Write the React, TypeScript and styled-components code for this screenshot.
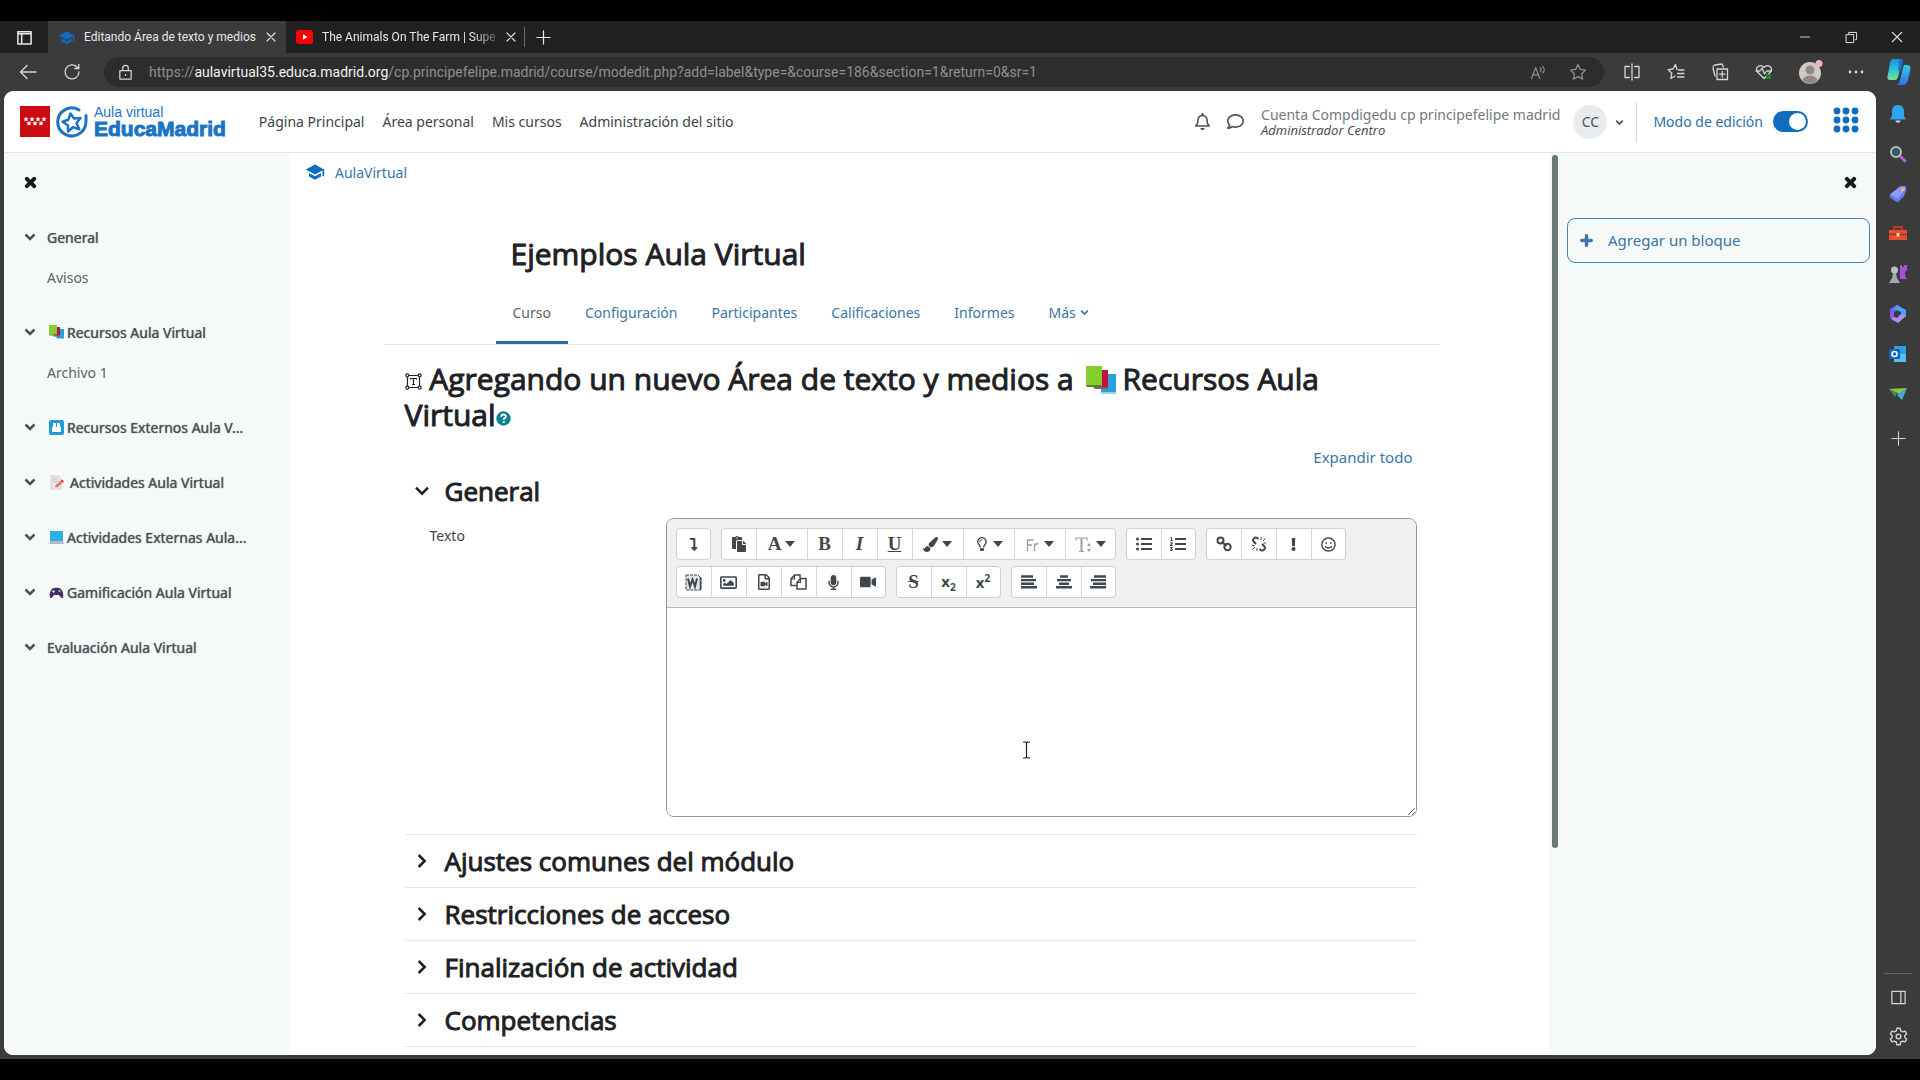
import React from "react";
import styled, { createGlobalStyle } from "styled-components";
import {
  FaExclamation,
  FaLevelDownAlt,
  FaListOl,
  FaListUl,
  FaMicrophone,
  FaPaintBrush,
  FaPaste,
  FaPlus,
  FaRegBell,
  FaRegComment,
  FaRegFileVideo,
  FaRegImage,
  FaRegLightbulb,
  FaRegSmile,
  FaTimes,
  FaVideo,
} from "react-icons/fa";

const UI = `"Noto Sans", "Open Sans", sans-serif`;
const HEADING = `"Open Sans", "Noto Sans", sans-serif`;
const CHROME = `Roboto, "Noto Sans", sans-serif`;

const c = {
  strip: "#212121",
  chrome: "#3b3b3b",
  field: "#2d2d2d",
  drawer: "#f5f9f8",
  link: "#3b75a5",
  brand: "#0f6cbf",
  logo: "#1c74c4",
  text: "#1d2125",
  muted: "#4b5257",
  line: "#e3e5e7",
};

const Global = createGlobalStyle`
  * { box-sizing: border-box; }
  html, body, #root { height: 100%; margin: 0; }
  body { background: #000; font-family: ${UI}; font-size: 14px; color: ${c.text}; }
  h1, h2, h3, ul, p { margin: 0; padding: 0; font-weight: 400; }
  ul { list-style: none; }
  a { text-decoration: none; color: ${c.link}; }
  button { font: inherit; color: inherit; background: none; border: 0; padding: 0; }
  svg { display: block; flex: none; }
`;

/* ---------- Browser window ---------- */

const Screen = styled.div`
  height: 100vh;
  padding: 21px 0;
  background: #000;
  overflow: hidden;
`;

const BrowserWindow = styled.div`
  display: flex;
  flex-direction: column;
  height: 100%;
  background: ${c.chrome};
`;

const TabStrip = styled.div`
  display: flex;
  align-items: center;
  height: 32px;
  flex: none;
  background: ${c.strip};
  color: #e8e8e8;
  font-family: ${CHROME};
  font-size: 12px;
`;

const StripButton = styled.button<{ $w: number }>`
  display: flex;
  align-items: center;
  justify-content: center;
  width: ${(p) => p.$w}px;
  height: 32px;
  color: #e8e8e8;
`;

const BrowserTab = styled.div<{ $active?: boolean }>`
  display: flex;
  align-items: center;
  gap: 9px;
  height: 32px;
  width: 238px;
  padding: 0 10px;
  background: ${(p) => (p.$active ? c.chrome : "transparent")};
`;

const TabTitle = styled.span<{ $fade?: boolean }>`
  flex: 1;
  white-space: nowrap;
  mask-image: ${(p) => (p.$fade ? "linear-gradient(90deg, #000 86%, #0004)" : "none")};
`;

const StripDivider = styled.span`
  width: 1px;
  height: 20px;
  background: #6a6a6a;
`;

const Spacer = styled.span`
  flex: 1;
`;

const Toolbar = styled.div`
  display: flex;
  align-items: center;
  height: 38px;
  flex: none;
  padding-left: 6px;
  color: #d6d6d6;
`;

const ToolButton = styled.button<{ $w?: number }>`
  display: flex;
  align-items: center;
  justify-content: center;
  width: ${(p) => p.$w ?? 44}px;
  height: 32px;
  flex: none;
`;

const AddressBar = styled.div`
  display: flex;
  align-items: center;
  flex: 1;
  height: 30px;
  margin: 0 6px 0 10px;
  padding: 0 6px 0 13px;
  border-radius: 15px;
  background: ${c.field};
  color: #8f8f8f;
  font-family: ${CHROME};
  font-size: 14px;
`;

const LockMark = styled.span`
  color: #d6d6d6;
`;

const Url = styled.span`
  flex: 1;
  margin-left: 15px;
  white-space: nowrap;
  overflow: hidden;

  b {
    font-weight: 400;
    color: #f2f2f2;
  }
`;

const Body = styled.div`
  display: flex;
  flex: 1;
  min-height: 0;
  padding: 0 0 4px 4px;
`;

const EdgeRail = styled.nav`
  display: flex;
  flex-direction: column;
  align-items: center;
  width: 44px;
  flex: none;
  padding-top: 3px;
  color: #d6d6d6;
`;

const RailButton = styled.button<{ $h?: number }>`
  display: flex;
  align-items: center;
  justify-content: center;
  width: 44px;
  height: ${(p) => p.$h ?? 40}px;
`;

const RailRule = styled.span`
  width: 28px;
  height: 1px;
  margin-bottom: 3px;
  background: #636363;
`;

/* ---------- Moodle page ---------- */

const Page = styled.div`
  display: flex;
  flex-direction: column;
  flex: 1;
  min-width: 0;
  border-radius: 9px;
  overflow: hidden;
  background: #fff;
`;

const Header = styled.header`
  display: flex;
  align-items: center;
  height: 62px;
  flex: none;
  padding: 0 17px 0 16px;
  border-bottom: 1px solid ${c.line};
`;

const Brand = styled.a`
  display: flex;
  align-items: center;
  gap: 6px;
`;

const BrandText = styled.span`
  display: flex;
  flex-direction: column;
  padding-bottom: 1px;
  color: ${c.logo};
  font-family: "Liberation Sans", Arial, sans-serif;
  font-size: 14px;
  line-height: 16px;

  b {
    font-size: 21px;
    line-height: 18px;
    -webkit-text-stroke: 1px ${c.logo};
  }
`;

const MainNav = styled.nav`
  display: flex;
  gap: 18px;
  margin-left: 33px;

  a {
    color: #3e4347;
  }
`;

const IconButton = styled.button<{ $m?: string }>`
  display: flex;
  align-items: center;
  color: ${c.muted};
  margin: ${(p) => p.$m ?? "0"};
`;

const User = styled.div`
  display: flex;
  flex-direction: column;
  margin-left: 17px;
  color: #73797d;
  line-height: 18px;

  em {
    font-family: ${HEADING};
    font-size: 13px;
    line-height: 13px;
    color: #3e4347;
  }
`;

const Avatar = styled.span`
  display: flex;
  align-items: center;
  justify-content: center;
  width: 34px;
  height: 34px;
  margin-left: 13px;
  border-radius: 50%;
  background: #e9ecef;
  color: ${c.muted};
`;

const ModeBox = styled.label`
  display: flex;
  align-items: center;
  gap: 10px;
  height: 40px;
  margin-left: 12px;
  padding-left: 16px;
  border-left: 1px solid #d8dbde;
  color: #2c6fa8;
`;

const Toggle = styled.input`
  appearance: none;
  display: flex;
  align-items: center;
  justify-content: flex-end;
  width: 35px;
  height: 21px;
  margin: 0;
  padding: 2px;
  border-radius: 11px;
  background: ${c.brand};

  &::before {
    content: "";
    width: 17px;
    height: 17px;
    border-radius: 50%;
    background: #fff;
  }
`;

const AppsButton = styled.button`
  margin-left: 25px;
  padding-bottom: 4px;
`;

const Columns = styled.div`
  display: flex;
  flex: 1;
  min-height: 0;
`;

const CourseIndex = styled.aside`
  width: 285px;
  flex: none;
  background: ${c.drawer};
  padding: 20px 16px 0 20px;
`;

const CloseButton = styled.button<{ $right?: boolean }>`
  display: flex;
  align-items: center;
  justify-content: center;
  width: 13px;
  height: 19px;
  color: #14181a;
  margin-left: ${(p) => (p.$right ? "auto" : "0")};
`;

const HeavyTimes = styled(FaTimes)`
  stroke: currentColor;
  stroke-width: 40px;
`;

const HeavyPlus = styled(FaPlus)`
  stroke: currentColor;
  stroke-width: 40px;
`;

const Sections = styled.ul`
  display: flex;
  flex-direction: column;
  gap: 15px;
  margin-top: 25px;
`;

const SectionHead = styled.div`
  display: flex;
  align-items: center;
  height: 40px;
`;

const SectionTitle = styled.a<{ $spaced?: boolean; $icon?: boolean }>`
  display: flex;
  align-items: center;
  gap: ${(p) => (p.$spaced ? 6 : 3)}px;
  margin-left: ${(p) => (p.$icon ? 13 : 11)}px;
  color: ${c.muted};
  text-shadow: 0 0 1px ${c.muted};
  white-space: nowrap;
`;

const SectionItem = styled.a`
  display: flex;
  align-items: center;
  height: 40px;
  padding-left: 23px;
  color: #5d6468;
`;

const Main = styled.main`
  flex: 1;
  min-width: 0;
  overflow: hidden;
  padding-right: 15px;
`;

const Breadcrumb = styled.nav`
  height: 38px;
  padding-left: 16px;

  a {
    display: flex;
    align-items: center;
    gap: 10px;
    height: 38px;
  }
`;

const Container = styled.div`
  max-width: 1056px;
  margin: 0 auto;
`;

const CourseTitle = styled.h1`
  margin-top: 45px;
  padding-left: 127px;
  font-family: ${HEADING};
  font-size: 30px;
  line-height: 36px;
  -webkit-text-stroke: 1px ${c.text};
`;

const CourseTabs = styled.nav`
  display: flex;
  margin-top: 8px;
  padding-left: 112px;
  border-bottom: 1px solid ${c.line};
`;

const CourseTab = styled.a<{ $active?: boolean }>`
  display: flex;
  align-items: center;
  gap: 4px;
  height: 64px;
  padding: 3px 17px 0;
  border-bottom: 3px solid ${(p) => (p.$active ? "#2a6ba6" : "transparent")};
  color: ${(p) => (p.$active ? "#5d6468" : c.link)};
`;

const Form = styled.form`
  padding: 16px 23px 0 21px;
`;

const FormTitle = styled.h2`
  padding-right: 60px;
  font-family: ${HEADING};
  font-size: 30px;
  line-height: 36px;
  -webkit-text-stroke: 1px ${c.text};

  svg {
    display: inline-block;
  }
`;

const TitleBooks = styled.span`
  margin: 0 7px 0 4px;

  svg {
    vertical-align: -6px;
  }
`;

const ExpandRow = styled.div`
  display: flex;
  justify-content: flex-end;
  margin-top: 12px;
  padding-right: 4px;
  font-size: 15px;
  line-height: 24px;
`;

const GroupHead = styled.h3<{ $ruled?: boolean }>`
  display: flex;
  align-items: center;
  gap: 15px;
  height: ${(p) => (p.$ruled ? 53 : 30)}px;
  margin-top: ${(p) => (p.$ruled ? 0 : 7)}px;
  padding-left: 9px;
  padding-bottom: 1px;
  border-top: ${(p) => (p.$ruled ? `1px solid ${c.line}` : "0")};
  font-family: ${HEADING};
  font-size: 26px;
  line-height: 30px;
  -webkit-text-stroke: 1px ${c.text};
`;

const Field = styled.div`
  display: grid;
  grid-template-columns: 261px 1fr;
  margin: 12px 0 17px;
`;

const FieldLabel = styled.label`
  padding: 8px 0 0 25px;
  line-height: 19px;
  color: #3e4347;
`;

const Editor = styled.div`
  position: relative;
  display: flex;
  flex-direction: column;
  height: 299px;
  border: 1px solid #8f959e;
  border-radius: 8px;
  overflow: hidden;
`;

const EditorTools = styled.div`
  display: flex;
  flex-direction: column;
  gap: 6px;
  padding: 9px;
  height: 89px;
  background: #f0f0f0;
  border-bottom: 1px solid #b4b8bc;
`;

const ToolRow = styled.div`
  display: flex;
  gap: 10px;
`;

const ToolGroup = styled.div`
  display: flex;
  border: 1px solid #cdd0d3;
  border-radius: 4px;
  background: #fff;
  overflow: hidden;
`;

const ToolItem = styled.button<{ $wide?: boolean; $faint?: boolean }>`
  display: flex;
  align-items: center;
  justify-content: center;
  gap: 4px;
  width: ${(p) => (p.$wide ? 51 : 35)}px;
  height: 30px;
  color: ${(p) => (p.$faint ? "#9a9fa3" : "#3f474c")};
  border-left: 1px solid #d5d8da;

  &:first-child {
    width: 34px;
    border-left: 0;
  }

  &:last-child {
    width: ${(p) => (p.$wide ? 50 : 34)}px;
  }

  &:only-child {
    width: 33px;
  }
`;

const Serif = styled.span<{ $style?: "italic" | "underline" | "strike" }>`
  font-family: "Liberation Serif", serif;
  font-weight: 700;
  font-size: 19px;
  line-height: 20px;
  font-style: ${(p) => (p.$style === "italic" ? "italic" : "normal")};
  text-decoration: ${(p) =>
    p.$style === "underline" ? "underline" : p.$style === "strike" ? "line-through" : "none"};
`;

const Script = styled.span`
  font-weight: 700;
  font-size: 15px;
  line-height: 18px;

  sub,
  sup {
    font-size: 10px;
    line-height: 9px;
  }
`;

const TextArea = styled.textarea`
  flex: 1;
  width: 100%;
  border: 0;
  outline: 0;
  resize: vertical;
  background: #fff;
`;

const Pointer = styled.span`
  position: absolute;
  left: 355px;
  top: 222px;
`;

const ScrollTrack = styled.div`
  width: 9px;
  flex: none;
  padding: 2px 0 0 3px;
  background: ${c.drawer};
`;

const ScrollThumb = styled.div`
  width: 6px;
  height: 77%;
  border-radius: 3px;
  background: #6b7876;
`;

const Blocks = styled.aside`
  width: 318px;
  flex: none;
  padding: 20px 6px 0 9px;
  background: ${c.drawer};
`;

const CloseRow = styled.div`
  display: flex;
  padding-right: 13px;
`;

const AddBlock = styled.a`
  display: flex;
  align-items: center;
  gap: 15px;
  height: 45px;
  margin-top: 26px;
  padding: 0 12px 1px;
  border: 1px solid #4585ae;
  border-radius: 8px;
  font-size: 15px;
`;

/* ---------- Drawings ---------- */

const Chevron = ({ s = 12, right = false, w = 3 }: { s?: number; right?: boolean; w?: number }) => (
  <svg width={s} height={s} viewBox="0 0 12 12" fill="none" stroke="currentColor">
    <path d={right ? "M3.5 1.5 8 6 3.5 10.5" : "M1.5 3.5 6 8l4.5-4.5"} strokeWidth={(w * 12) / s / 1.2} />
  </svg>
);

const Line = ({ s = 18, children, w = 1.3 }: { s?: number; w?: number; children: React.ReactNode }) => (
  <svg
    width={s}
    height={s}
    viewBox="0 0 18 18"
    fill="none"
    stroke="currentColor"
    strokeWidth={w}
    strokeLinecap="round"
    strokeLinejoin="round"
  >
    {children}
  </svg>
);

const Cross = ({ s }: { s: number }) => (
  <Line s={s} w={1.6}>
    <path d="M3 3l12 12M15 3 3 15" />
  </Line>
);

const Hat = ({ s = 20, color = c.brand }: { s?: number; color?: string }) => (
  <svg width={s} height={s} viewBox="0 0 20 20" fill={color}>
    <path d="M10 2.5 0.8 7.5 10 12.5l7.5-4.1v5.8h1.7V7.5z" />
    <path d="M4 11v3.6l6 3.2 6-3.2V11l-6 3.3z" />
  </svg>
);

const MadridFlag = () => (
  <svg width="30" height="31" viewBox="0 0 30 31">
    <rect width="30" height="31" fill="#cc0a12" />
    {[6, 12, 18, 24].map((x) => (
      <path key={x} d={`M${x} 10.6l.8 1.6 1.8.2-1.3 1.2.3 1.8-1.6-.9-1.6.9.3-1.8-1.3-1.2 1.8-.2z`} fill="#fff" />
    ))}
    {[9, 15, 21].map((x) => (
      <path key={x} d={`M${x} 14.8l.8 1.6 1.8.2-1.3 1.2.3 1.8-1.6-.9-1.6.9.3-1.8-1.3-1.2 1.8-.2z`} fill="#fff" />
    ))}
  </svg>
);

const EducaMark = () => (
  <svg width="32" height="32" viewBox="0 0 32 32" fill="none" stroke={c.logo}>
    <path d="M23 4A14 14 0 1 0 22 28.500C27 26 30 21.500 30 15V9.500" strokeWidth="3" strokeLinecap="round" />
    <path
      d="M14.500 7.500l3.500 5 6.500-.5-4 5 2.800 6.200-6.400-2-4.800 4.300-.2-6.300-5.400-3.400 5.800-2z"
      strokeWidth="2.500"
      strokeLinejoin="round"
    />
  </svg>
);

const Books = ({ s = 15 }: { s?: number }) => (
  <svg width={s} height={s} viewBox="0 0 30 30">
    <path d="M15 8h15v18H15z" fill="#2aa0dd" />
    <path d="M14 26h16v2H16z" fill="#9ccfe8" />
    <path d="M9 4h13v17H9z" fill="#c3113f" />
    <path d="M7 21h15v2H9z" fill="#8a5a68" />
    <path d="M0 0h16v19H0z" fill="#83cf2c" />
    <path d="M0 19h16v2H1z" fill="#4d8a20" />
  </svg>
);

const Disk = () => (
  <svg width="15" height="15" viewBox="0 0 15 15">
    <rect width="15" height="15" rx="2" fill="#1e9bdc" />
    <path d="M3 7h9v5H3zM4 3h3v4H4zM8 3h3v4H8z" fill="#fff" />
  </svg>
);

const Memo = () => (
  <svg width="15" height="15" viewBox="0 0 15 15">
    <path d="M2 1h8l2 3v10H2z" fill="#ece4ea" stroke="#d8d0da" />
    <path d="M4 4h5M4 6.500h5" stroke="#c4bdca" />
    <path d="M5.500 11.500 12 5.500l2 2-6 5z" fill="#e8793a" />
    <path d="M12 5.500l1-1 2 2-1 1z" fill="#c22d3f" />
  </svg>
);

const Laptop = () => (
  <svg width="15" height="15" viewBox="0 0 15 15">
    <path d="M1 1h13v10H1z" fill="#29b0ea" />
    <path d="M1 11h13l1 3H0z" fill="#b7b9c4" />
  </svg>
);

const Gamepad = () => (
  <svg width="15" height="15" viewBox="0 0 15 15">
    <path
      d="M3.500 3.500C5 2.500 10 2.500 11.500 3.500 13.500 5 15 10 14 12.500c-1 1.500-3-.5-4-2.500H5c-1 2-3 4-4 2.500C0 10 1.500 5 3.500 3.500z"
      fill="#43315f"
    />
    <path d="M4.500 5v3M3 6.500h3" stroke="#c9bfe0" />
    <circle cx="10.500" cy="6" r="1" fill="#c9bfe0" />
  </svg>
);

const TextAreaMark = () => (
  <svg width="17" height="17" viewBox="0 0 17 17" fill="none" stroke="#222" strokeWidth="1.200">
    <path d="M2.500 4v9M14.500 4v9M4 2.500h9M4 14.500h9" />
    <circle cx="2.300" cy="2.300" r="1.500" />
    <circle cx="14.700" cy="2.300" r="1.500" />
    <circle cx="2.300" cy="14.700" r="1.500" />
    <circle cx="14.700" cy="14.700" r="1.500" />
    <path d="M5.500 6.500v-1h6v1M8.500 5.500v6M7 11.500h3" />
  </svg>
);

const HelpMark = () => (
  <svg width="15" height="15" viewBox="0 0 15 15">
    <circle cx="7.500" cy="7.500" r="7.200" fill="#0f7f93" />
    <path d="M5.200 5.700c.2-3 4.800-2.700 4.600 0-.1 1.400-2.100 1.500-2.100 3" fill="none" stroke="#fff" strokeWidth="1.900" />
    <path d="M6.700 10.200h2v1.900h-2z" fill="#fff" />
  </svg>
);

const Caret = () => (
  <svg width="10" height="6" viewBox="0 0 10 6" fill="#3f474c">
    <path d="M0 0h10L5 6z" />
  </svg>
);

const AlignMark = ({ rows }: { rows: [number, number][] }) => (
  <svg width="16" height="14" viewBox="0 0 16 14" stroke="currentColor" strokeWidth="2.400">
    {rows.map(([a, b], i) => (
      <path key={i} d={`M${a} ${1.5 + i * 3.6}H${b}`} />
    ))}
  </svg>
);

const LinkMark = () => (
  <svg width="16" height="16" viewBox="0 0 16 16" fill="none" stroke="currentColor" strokeWidth="2">
    <circle cx="4.500" cy="4.500" r="3" />
    <circle cx="11.500" cy="11" r="3.200" />
    <path d="M5.500 5.500l5 4.500" />
  </svg>
);

const UnlinkMark = () => (
  <svg width="16" height="16" viewBox="0 0 16 16" fill="none" stroke="currentColor">
    <path d="M7.500 3 6 1.800C4 .5 1 3.500 2.500 5.500L5 8M8.500 13l1.500 1.200c2 1.300 5-1.700 3.500-3.700L11 8" strokeWidth="2" />
    <path d="M10 4V1M12 5l2.500-2.500M12.500 7H15M6 12v3M4 11l-2.500 2.500M3.500 9.500H1" strokeWidth="1" />
  </svg>
);

const FilesMark = () => (
  <svg width="17" height="16" viewBox="0 0 17 16" fill="none" stroke="currentColor" strokeWidth="1.500">
    <path d="M6.500 11.500H1V5l3.500-4H10v3" />
    <path d="M4.500 1v4H1" strokeWidth="1.200" />
    <path d="M10.500 4.500H16v10.500H7V8.500z" fill="#fff" />
    <path d="M10.500 4.500v4H7" strokeWidth="1.200" />
  </svg>
);

const FontMark = () => (
  <svg width="14" height="15" viewBox="0 0 14 15" fill="none" stroke="currentColor" strokeWidth="1.300">
    <path d="M1.500 14V3h6M1.500 8H6M8.500 14V6.500M8.500 9c.5-2 2-2.500 4-2.200" />
  </svg>
);

const SizeMark = () => (
  <svg width="17" height="17" viewBox="0 0 17 17" fill="none" stroke="currentColor">
    <path d="M1 4.500V2h11v2.500" strokeWidth="1.200" />
    <path d="M6.500 2v13" strokeWidth="2" />
    <path d="M4 15.500h5" strokeWidth="1.200" />
    <path d="M14 7l2 3h-4zM14 16l2-3h-4z" fill="currentColor" stroke="none" />
  </svg>
);

const WordMark = () => (
  <svg width="17" height="17" viewBox="0 0 17 17" fill="none" stroke="currentColor">
    <path d="M1 1h12l3 3v12H1z" fill="#e3e5e6" strokeWidth="1" strokeDasharray="3 1" />
    <path d="M3 4.500l2 8 2.500-7 2.500 7 2-8" strokeWidth="2" />
    <path d="M15.500 3v13" strokeWidth="1.500" />
  </svg>
);

const IBeam = () => (
  <svg width="9" height="18" viewBox="0 0 9 18" fill="none" stroke="#222" strokeWidth="1.200">
    <path d="M1 1h2.500l1 1 1-1H8M1 17h2.500l1-1 1 1H8M4.500 2v14" />
  </svg>
);

const Copilot = () => (
  <svg width="24" height="28" viewBox="0 0 24 28">
    <defs>
      <linearGradient id="cpA" x1="0" y1="0" x2="0" y2="1">
        <stop offset="0" stopColor="#1b8de6" />
        <stop offset=".5" stopColor="#27c4e0" />
        <stop offset="1" stopColor="#7fe08a" />
      </linearGradient>
      <linearGradient id="cpB" x1="0" y1="0" x2="0" y2="1">
        <stop offset="0" stopColor="#2fd0e6" />
        <stop offset="1" stopColor="#2a6ff0" />
      </linearGradient>
    </defs>
    <path d="M17 7h3c4 0 4 3 3 6l-2 9c-1 3-2 5-5 5H9c2 0 3-2 4-5l3-12z" fill="url(#cpB)" />
    <path d="M6 1h8c2 0 1 2 1 3l-4 15c-1 3-2 3-4 3H3c-3 0-3-3-2-6L3 5c1-3 1-4 3-4z" fill="url(#cpA)" />
    <path d="M12 1h2c2 0 2 2 2.500 4L14 13h-3z" fill="#1663c9" opacity=".7" />
  </svg>
);

const railIcons: [string, React.ReactNode][] = [
  [
    "Notificaciones",
    <svg width="18" height="20" viewBox="0 0 18 20">
      <path d="M9 1c4 0 6 3 6 6v5l2 3.500H1L3 12V7c0-3 2-6 6-6z" fill="#2fa3ec" />
      <path d="M6.500 16.500h5c0 3-5 3-5 0z" fill="#cfd6dc" />
    </svg>,
  ],
  [
    "Buscar",
    <svg width="18" height="18" viewBox="0 0 18 18">
      <path d="M11 11l5 5" stroke="#b55ad8" strokeWidth="3" strokeLinecap="round" />
      <circle cx="7" cy="7" r="5" fill="#2f5a68" stroke="#b9c0c4" strokeWidth="2" />
    </svg>,
  ],
  [
    "Compras",
    <svg width="18" height="18" viewBox="0 0 18 18">
      <path d="M11 1.500 16 1l1.500 4-3 7-6 5.500L1 12.500v-3z" fill="#6878ea" />
      <path d="M11 1.500 16 1l1 3L9 14 1 9.500z" fill="#8a9bff" />
      <circle cx="13.500" cy="4.500" r="1.700" fill="#f2c14e" />
    </svg>,
  ],
  [
    "Herramientas",
    <svg width="20" height="18" viewBox="0 0 20 18">
      <path d="M6 5V2h8v3" fill="none" stroke="#c23a22" strokeWidth="1.800" />
      <path d="M1 5h18v10H1z" fill="#e2502f" />
      <path d="M1 9.500h18" stroke="#a8301a" strokeWidth="1.500" />
      <path d="M8.500 8h3v3.500h-3z" fill="#f4d3b0" />
    </svg>,
  ],
  [
    "Juegos",
    <svg width="20" height="18" viewBox="0 0 20 18">
      <path d="M12 0h2v2h2V0h3v5l-2 2v4l2 3h-7z" fill="#a94fe0" />
      <circle cx="6.500" cy="5" r="3.500" fill="#b9bec1" />
      <path d="M5 8h3l1 5 3 5H1l3-5z" fill="#a3a8ab" />
    </svg>,
  ],
  [
    "Microsoft 365",
    <svg width="18" height="18" viewBox="0 0 18 18">
      <path d="M8 0 1 4v9l4 3v-9l5-3z" fill="#7c5cf0" />
      <path d="M8 0l9 5v7l-5-2V7L5 4z" fill="#4aa3f2" />
      <path d="M17 11l-8 7-7-4 3-2 3 1 4-4z" fill="#b08cf2" />
    </svg>,
  ],
  [
    "Outlook",
    <svg width="18" height="18" viewBox="0 0 18 18">
      <path d="M5 1h12v12l-2 4H5z" fill="#2b9fe8" />
      <path d="M5 9h12v8H5z" fill="#55c0f5" />
      <rect x="0" y="4" width="11" height="10" rx="1" fill="#0f64b8" />
      <circle cx="5.500" cy="9" r="2.500" fill="none" stroke="#fff" strokeWidth="1.600" />
    </svg>,
  ],
  [
    "Drop",
    <svg width="18" height="16" viewBox="0 0 18 16">
      <path d="M0 3l18-1-8 6z" fill="#93c73d" />
      <path d="M18 2l-5 12-5-5z" fill="#4aa5dd" />
      <path d="M0 3l8 3.500L6 11z" fill="#3f8f5a" />
    </svg>,
  ],
];

/* ---------- Data ---------- */

type Section = { title: string; icon?: React.ReactNode; spaced?: boolean; items?: string[] };

const sections: Section[] = [
  { title: "General", items: ["Avisos"] },
  { title: "Recursos Aula Virtual", icon: <Books />, items: ["Archivo 1"] },
  { title: "Recursos Externos Aula V...", icon: <Disk /> },
  { title: "Actividades Aula Virtual", icon: <Memo />, spaced: true },
  { title: "Actividades Externas Aula...", icon: <Laptop /> },
  { title: "Gamificación Aula Virtual", icon: <Gamepad /> },
  { title: "Evaluación Aula Virtual" },
];

type Tool = { name: string; icon: React.ReactNode; menu?: boolean; faint?: boolean };

const toolRows: Tool[][][] = [
  [
    [{ name: "Mostrar más botones", icon: <FaLevelDownAlt size={13} /> }],
    [
      { name: "Pegar", icon: <FaPaste size={16} /> },
      { name: "Estilos", icon: <Serif>A</Serif>, menu: true },
      { name: "Negrita", icon: <Serif>B</Serif> },
      { name: "Cursiva", icon: <Serif $style="italic">I</Serif> },
      { name: "Subrayado", icon: <Serif $style="underline">U</Serif> },
      { name: "Color", icon: <FaPaintBrush size={15} />, menu: true },
      { name: "Resaltar", icon: <FaRegLightbulb size={14} />, menu: true },
      { name: "Fuente", icon: <FontMark />, menu: true, faint: true },
      { name: "Tamaño", icon: <SizeMark />, menu: true, faint: true },
    ],
    [
      { name: "Lista", icon: <FaListUl size={16} /> },
      { name: "Lista numerada", icon: <FaListOl size={16} /> },
    ],
    [
      { name: "Enlace", icon: <LinkMark /> },
      { name: "Quitar enlace", icon: <UnlinkMark /> },
      { name: "Autoenlace", icon: <FaExclamation size={13} /> },
      { name: "Emoji", icon: <FaRegSmile size={15} /> },
    ],
  ],
  [
    [
      { name: "Importar Word", icon: <WordMark /> },
      { name: "Imagen", icon: <FaRegImage size={17} /> },
      { name: "Multimedia", icon: <FaRegFileVideo size={16} /> },
      { name: "Archivos", icon: <FilesMark /> },
      { name: "Grabar audio", icon: <FaMicrophone size={15} /> },
      { name: "Grabar vídeo", icon: <FaVideo size={16} /> },
    ],
    [
      { name: "Tachado", icon: <Serif $style="strike">S</Serif> },
      { name: "Subíndice", icon: <Script>x<sub>2</sub></Script> },
      { name: "Superíndice", icon: <Script>x<sup>2</sup></Script> },
    ],
    [
      { name: "Izquierda", icon: <AlignMark rows={[[0, 12], [0, 15], [0, 13], [0, 16]]} /> },
      { name: "Centrar", icon: <AlignMark rows={[[4, 12], [1, 15], [3, 13], [0, 16]]} /> },
      { name: "Derecha", icon: <AlignMark rows={[[4, 16], [1, 16], [3, 16], [0, 16]]} /> },
    ],
  ],
];

const groups = ["Ajustes comunes del módulo", "Restricciones de acceso", "Finalización de actividad", "Competencias"];

/* ---------- Parts ---------- */

const BrowserChrome = () => (
  <>
    <TabStrip>
      <StripButton $w={48} aria-label="Pestañas">
        <Line s={17} w={1.6}>
          <path d="M2 3h14v13H2zM2 5h14M6 6v10" />
        </Line>
      </StripButton>
      <BrowserTab $active>
        <Hat s={17} />
        <TabTitle>Editando Área de texto y medios</TabTitle>
        <Cross s={12} />
      </BrowserTab>
      <BrowserTab>
        <svg width="17" height="14" viewBox="0 0 17 14">
          <rect width="17" height="14" rx="3" fill="#f00" />
          <path d="M7 4.200v5.600L11.500 7z" fill="#fff" />
        </svg>
        <TabTitle $fade>The Animals On The Farm | Supe</TabTitle>
        <Cross s={12} />
      </BrowserTab>
      <StripDivider />
      <StripButton $w={36} aria-label="Nueva pestaña">
        <Line s={17}>
          <path d="M9 2v14M2 9h14" />
        </Line>
      </StripButton>
      <Spacer />
      <StripButton $w={46} aria-label="Minimizar">
        <Line s={12}>
          <path d="M2 9h14" />
        </Line>
      </StripButton>
      <StripButton $w={46} aria-label="Restaurar">
        <Line s={13}>
          <path d="M2 5h10v11H2zM5 4V2h11v10h-2" />
        </Line>
      </StripButton>
      <StripButton $w={46} aria-label="Cerrar">
        <Cross s={14} />
      </StripButton>
    </TabStrip>
    <Toolbar>
      <ToolButton aria-label="Atrás">
        <Line>
          <path d="M17 9H1.500M8 2.500 1.500 9 8 15.500" />
        </Line>
      </ToolButton>
      <ToolButton aria-label="Actualizar">
        <Line>
          <path d="M16 9a7 7 0 1 1-2-5l1.500 1.500M15.800 1.500v4h-4" />
        </Line>
      </ToolButton>
      <AddressBar>
        <LockMark>
          <Line s={17}>
            <path d="M3 7h12v9H3zM6 7V4.500a3 3 0 0 1 6 0V7M9 11v1" />
          </Line>
        </LockMark>
        <Url>
          https://<b>aulavirtual35.educa.madrid.org</b>
          /cp.principefelipe.madrid/course/modedit.php?add=label&amp;type=&amp;course=186&amp;section=1&amp;return=0&amp;sr=1
        </Url>
        <ToolButton $w={40} aria-label="Leer en voz alta">
          <Line s={17}>
            <path d="M1.500 15.500 6 4l4.500 11.500M3 11.500h6M11 4c1 1 1 3 0 4M13.500 2.500c2 2 2 5 0 7" />
          </Line>
        </ToolButton>
        <ToolButton $w={40} aria-label="Favorito">
          <Line>
            <path d="M9 1.500l2.300 4.900 5.200.700-3.800 3.700.9 5.300L9 13.600l-4.600 2.500.9-5.300L1.500 7.100l5.200-.700z" />
          </Line>
        </ToolButton>
      </AddressBar>
      <ToolButton aria-label="Pantalla dividida">
        <Line>
          <path d="M6.500 3.500H2v11h4.500M11.500 3.500H16v11h-4.500M9 1v16" />
        </Line>
      </ToolButton>
      <ToolButton aria-label="Favoritos">
        <Line>
          <path d="M10 6.500 8.500 1.500 6 6l-4.800.700 3.600 3.600-1 5.200L8 13M11.500 7H17M10.500 10.500H17M10.500 14H17" />
        </Line>
      </ToolButton>
      <ToolButton aria-label="Colecciones">
        <Line>
          <path d="M6 6h10.500v10.500H6zM4 13 2 5c0-2 0-2.500 2-3l7-1 1.500 3M11.200 8.500v5.500M8.500 11.200H14" />
        </Line>
      </ToolButton>
      <ToolButton aria-label="Rendimiento">
        <Line>
          <path d="M9 15.500 2.500 9C-.5 5 5 0 9 4.500 13 0 18.500 5 15.500 9zM1 8h4l2-3 2.500 6 2-3h5" />
          <path d="M11 11h5v5h-5z" fill="#1f8a2a" stroke="none" />
        </Line>
      </ToolButton>
      <ToolButton $w={48} aria-label="Perfil">
        <svg width="26" height="26" viewBox="0 0 26 26">
          <circle cx="13" cy="14" r="11" fill="#cfcac6" />
          <circle cx="13" cy="11" r="4.500" fill="#8f8a87" />
          <path d="M5.500 21c2-6 13-6 15 0-4 5-11 5-15 0z" fill="#8f8a87" />
          <circle cx="22" cy="4.500" r="3.500" fill="#f2b3c0" />
        </svg>
      </ToolButton>
      <ToolButton aria-label="Más opciones">
        <svg width="16" height="4" viewBox="0 0 16 4" fill="currentColor">
          <circle cx="2" cy="2" r="1.400" />
          <circle cx="8" cy="2" r="1.400" />
          <circle cx="14" cy="2" r="1.400" />
        </svg>
      </ToolButton>
      <ToolButton $w={42} aria-label="Copilot">
        <Copilot />
      </ToolButton>
    </Toolbar>
  </>
);

const SiteHeader = () => (
  <Header>
    <Brand href="#">
      <MadridFlag />
      <EducaMark />
      <BrandText>
        Aula virtual
        <b>EducaMadrid</b>
      </BrandText>
    </Brand>
    <MainNav>
      <a href="#">Página Principal</a>
      <a href="#">Área personal</a>
      <a href="#">Mis cursos</a>
      <a href="#">Administración del sitio</a>
    </MainNav>
    <Spacer />
    <IconButton aria-label="Notificaciones">
      <FaRegBell size={17} />
    </IconButton>
    <IconButton $m="0 0 0 16px" aria-label="Mensajes">
      <FaRegComment size={17} />
    </IconButton>
    <User>
      Cuenta Compdigedu cp principefelipe madrid
      <em>Administrador Centro</em>
    </User>
    <Avatar>CC</Avatar>
    <IconButton $m="2px 0 0 8px" aria-label="Menú de usuario">
      <Chevron s={9} w={2} />
    </IconButton>
    <ModeBox>
      Modo de edición
      <Toggle type="checkbox" role="switch" defaultChecked />
    </ModeBox>
    <AppsButton aria-label="Aplicaciones">
      <svg width="26" height="26" viewBox="0 0 26 26" fill={c.brand}>
        {[4, 13, 22].map((y) => [4, 13, 22].map((x) => <circle key={`${x}-${y}`} cx={x} cy={y} r="3.400" />))}
      </svg>
    </AppsButton>
  </Header>
);

const EditorField = () => (
  <Field>
    <FieldLabel htmlFor="texto">Texto</FieldLabel>
    <Editor>
      <EditorTools>
        {toolRows.map((row, r) => (
          <ToolRow key={r}>
            {row.map((group, g) => (
              <ToolGroup key={g}>
                {group.map((t) => (
                  <ToolItem key={t.name} type="button" title={t.name} $wide={t.menu} $faint={t.faint}>
                    {t.icon}
                    {t.menu && <Caret />}
                  </ToolItem>
                ))}
              </ToolGroup>
            ))}
          </ToolRow>
        ))}
      </EditorTools>
      <TextArea id="texto" />
      <Pointer>
        <IBeam />
      </Pointer>
    </Editor>
  </Field>
);

export default function App() {
  return (
    <Screen>
      <Global />
      <BrowserWindow>
        <BrowserChrome />
        <Body>
          <Page>
            <SiteHeader />
            <Columns>
              <CourseIndex>
                <CloseButton aria-label="Cerrar índice">
                  <HeavyTimes size={15} />
                </CloseButton>
                <Sections>
                  {sections.map((s) => (
                    <li key={s.title}>
                      <SectionHead>
                        <IconButton aria-label={s.title}>
                          <Chevron />
                        </IconButton>
                        <SectionTitle href="#" $spaced={s.spaced} $icon={!!s.icon}>
                          {s.icon}
                          {s.title}
                        </SectionTitle>
                      </SectionHead>
                      {s.items?.map((i) => (
                        <SectionItem key={i} href="#">
                          {i}
                        </SectionItem>
                      ))}
                    </li>
                  ))}
                </Sections>
              </CourseIndex>
              <Main>
                <Breadcrumb>
                  <a href="#">
                    <Hat />
                    AulaVirtual
                  </a>
                </Breadcrumb>
                <Container>
                  <CourseTitle>Ejemplos Aula Virtual</CourseTitle>
                  <CourseTabs>
                    <CourseTab href="#" $active>
                      Curso
                    </CourseTab>
                    <CourseTab href="#">Configuración</CourseTab>
                    <CourseTab href="#">Participantes</CourseTab>
                    <CourseTab href="#">Calificaciones</CourseTab>
                    <CourseTab href="#">Informes</CourseTab>
                    <CourseTab href="#">
                      Más <Chevron s={9} w={2} />
                    </CourseTab>
                  </CourseTabs>
                  <Form>
                    <FormTitle>
                      <TextAreaMark /> Agregando un nuevo Área de texto y medios a{" "}
                      <TitleBooks>
                        <Books s={30} />
                      </TitleBooks>
                      Recursos Aula Virtual
                      <HelpMark />
                    </FormTitle>
                    <ExpandRow>
                      <a href="#">Expandir todo</a>
                    </ExpandRow>
                    <GroupHead>
                      <Chevron s={16} />
                      General
                    </GroupHead>
                    <EditorField />
                    {groups.map((g) => (
                      <GroupHead key={g} $ruled>
                        <Chevron s={16} right />
                        {g}
                      </GroupHead>
                    ))}
                    <GroupHead $ruled />
                  </Form>
                </Container>
              </Main>
              <ScrollTrack>
                <ScrollThumb />
              </ScrollTrack>
              <Blocks>
                <CloseRow>
                  <CloseButton $right aria-label="Cerrar bloques">
                    <HeavyTimes size={15} />
                  </CloseButton>
                </CloseRow>
                <AddBlock href="#">
                  <HeavyPlus size={13} />
                  Agregar un bloque
                </AddBlock>
              </Blocks>
            </Columns>
          </Page>
          <EdgeRail>
            {railIcons.map(([name, icon]) => (
              <RailButton key={name} aria-label={name}>
                {icon}
              </RailButton>
            ))}
            <RailButton $h={48} aria-label="Añadir">
              <Line s={15}>
                <path d="M9 1v16M1 9h16" />
              </Line>
            </RailButton>
            <Spacer />
            <RailRule />
            <RailButton aria-label="Barra lateral">
              <Line s={17}>
                <path d="M2 2.500h14v13H2zM11.500 2.500v13" />
              </Line>
            </RailButton>
            <RailButton $h={38} aria-label="Configuración">
              <Line s={19}>
                <path d="M7.500 1.200h3l.6 2.400 1.700 1 2.400-.7 1.500 2.600-1.800 1.700v1.600l1.800 1.700-1.500 2.600-2.400-.7-1.700 1-.6 2.400h-3l-.6-2.400-1.700-1-2.400.7-1.500-2.600 1.800-1.700V8.200L1.300 6.500l1.500-2.600 2.400.7 1.700-1z" />
                <circle cx="9" cy="9" r="2.200" />
              </Line>
            </RailButton>
          </EdgeRail>
        </Body>
      </BrowserWindow>
    </Screen>
  );
}
